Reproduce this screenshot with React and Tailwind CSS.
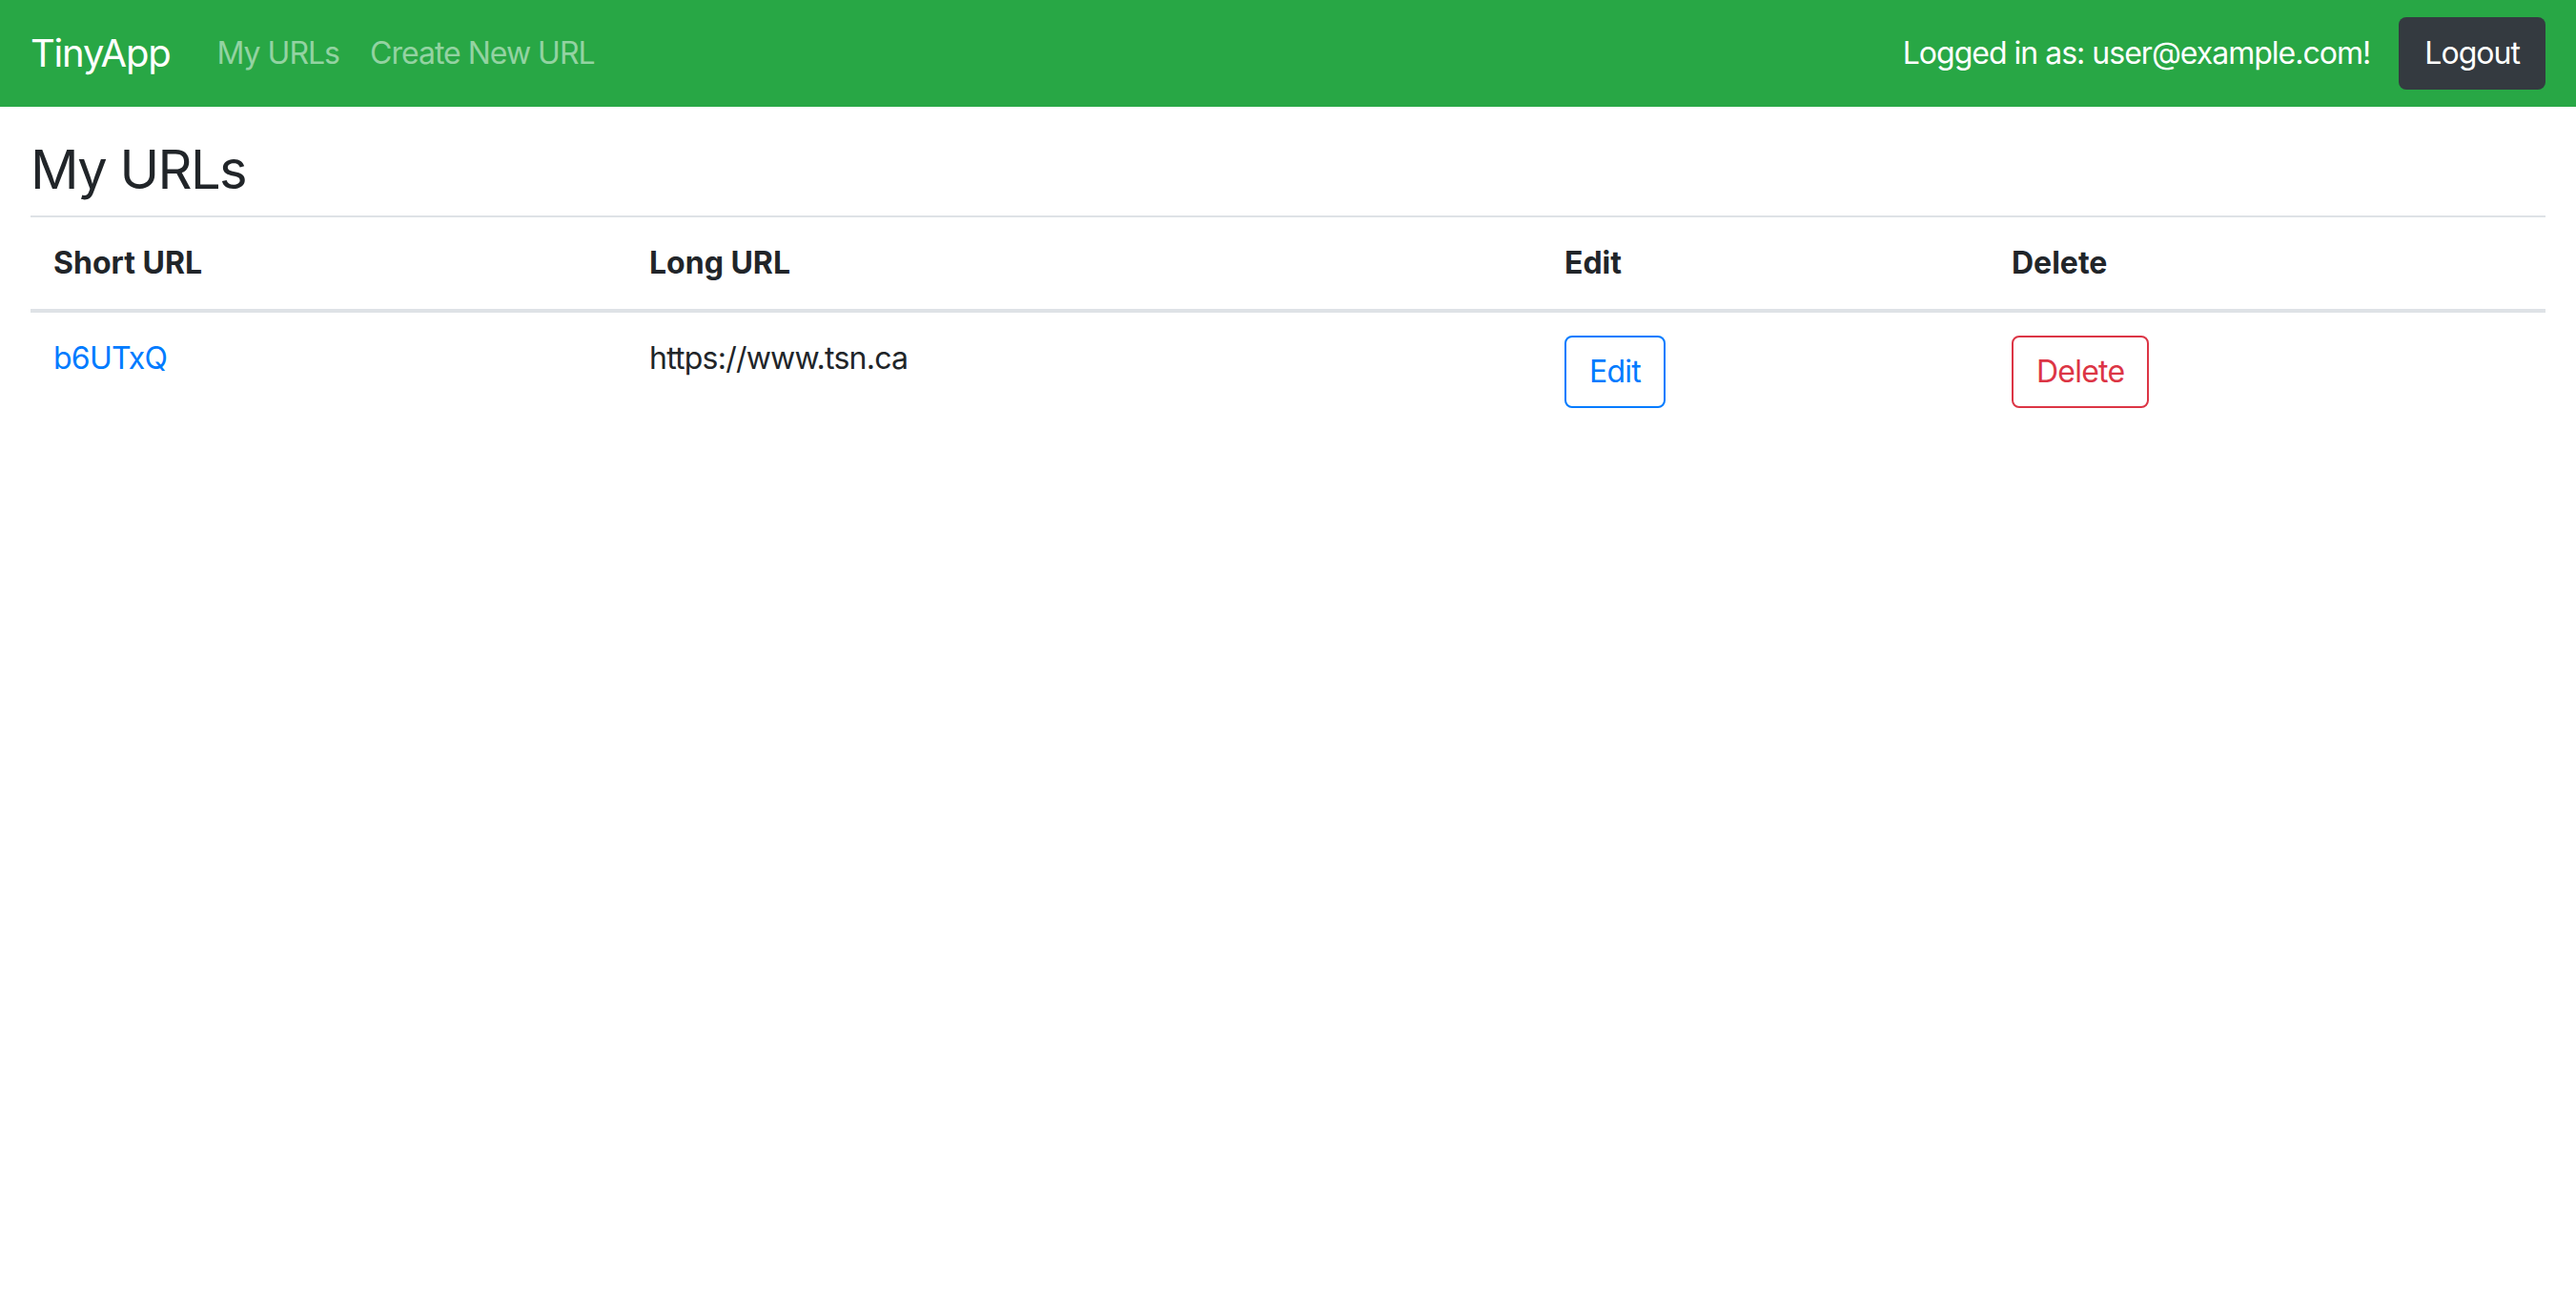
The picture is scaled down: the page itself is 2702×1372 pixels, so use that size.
import React from "react";

const urls = [{ id: "b6UTxQ", longURL: "https://www.tsn.ca" }];

const Header = ({ email }) => {
    return (
        <nav className="h-[112px] bg-[#28a745] px-[32px] flex items-center">
            <a className="text-[40px] text-white mr-[33px] tracking-[-0.03em]">TinyApp</a>
            <div className="flex items-center text-[32px] text-white/50 tracking-[-0.031em]">
                <a className="px-[16px]">My URLs</a>
                <a className="px-[16px]">Create New URL</a>
            </div>

            {/* User */}
            <div className="ml-auto flex items-center">
                <span className="text-[32px] text-white mr-[30px] tracking-[-0.031em]">Logged in as: {email}!</span>
                <button className="h-[76px] px-[27px] rounded-[8px] bg-[#343a40] text-white text-[32px] tracking-[-0.03em]">
                    Logout
                </button>
            </div>
        </nav>
    );
};

const App = () => {
    return (
        <div className="min-h-screen bg-white text-[#212529]" style={{ fontFamily: "Inter, 'Noto Sans', sans-serif" }}>
            <Header email="user@example.com" />

            <main className="px-[32px]">
                <h2 className="text-[56px] leading-[67px] tracking-[-0.028em] mt-[33px] mb-[14px]">My URLs</h2>

                <div className="border-t-2 border-[#dee2e6] text-[32px]">
                    {/* Head */}
                    <div className="grid grid-cols-[625px_960px_469px_1fr] font-bold border-b-4 border-[#dee2e6]">
                        <div className="p-[24px] leading-[48px]">Short URL</div>
                        <div className="p-[24px] leading-[48px]">Long URL</div>
                        <div className="p-[24px] leading-[48px]">Edit</div>
                        <div className="p-[24px] leading-[48px]">Delete</div>
                    </div>

                    {/* Rows */}
                    {urls.map((url) => (
                        <div key={url.id} className="grid grid-cols-[625px_960px_469px_1fr] tracking-[-0.024em]">
                            <div className="p-[24px] leading-[48px]">
                                <a className="text-[#007bff]">{url.id}</a>
                            </div>
                            <div className="p-[24px] leading-[48px]">{url.longURL}</div>
                            <div className="p-[24px]">
                                <button className="h-[76px] px-[24px] border-2 border-[#007bff] text-[#007bff] rounded-[8px] leading-[48px]">
                                    Edit
                                </button>
                            </div>
                            <div className="p-[24px]">
                                <button className="h-[76px] px-[24px] border-2 border-[#dc3545] text-[#dc3545] rounded-[8px] leading-[48px]">
                                    Delete
                                </button>
                            </div>
                        </div>
                    ))}
                </div>
            </main>
        </div>
    );
};

export default App;
